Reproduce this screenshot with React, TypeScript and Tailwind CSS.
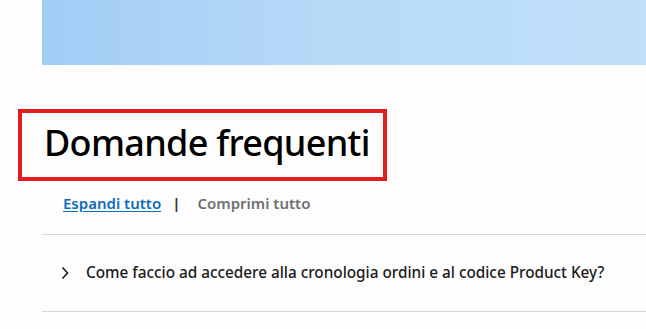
import { useState } from 'react'

export default function App() {
    const [open, setOpen] = useState(false)

    return (
        <div className="w-[646px] h-[329px] overflow-hidden bg-[#fdfdfd]" style={{ fontFamily: '"Noto Sans", "Open Sans", sans-serif' }}>
            {/* banner */}
            <div className="ml-[42px] h-[65px] bg-gradient-to-r from-[#a2cdf6] via-[#b8daf8] to-[#c0e0f9]" />

            {/* titolo */}
            <div className="mt-[44px] ml-[18px] w-[369px] h-[72px] border-4 border-[#e41c1c] flex items-center pl-[22px]">
                <h2 className="text-[36px] font-medium text-black tracking-[-0.7px] leading-none whitespace-nowrap -mt-[4px]">Domande frequenti</h2>
            </div>

            {/* azioni */}
            <div className="mt-[11px] ml-[63px] flex items-center text-[15px] font-semibold">
                <button className="text-[#0f6cbd] underline underline-offset-2">Espandi tutto</button>
                <span className="ml-[11px] mr-[17px] text-[#333] font-bold">|</span>
                <button className="text-[#707070]">Comprimi tutto</button>
            </div>

            {/* faq */}
            <div className="ml-[42px] mt-[19px] border-t border-[#d6d6d6]">
                <button
                    className="w-full h-[77px] flex items-center pl-[19px] text-left border-b border-[#d6d6d6]"
                    onClick={() => setOpen(!open)}
                >
                    <svg className="w-[8px] h-[14px] text-[#1a1a1a]" viewBox="0 0 8 14" fill="none" stroke="currentColor" strokeWidth={1.6}>
                        <path d="M1.5 1.5L6.5 7L1.5 12.5" />
                    </svg>
                    <span className="ml-[17px] text-[15.3px] font-medium text-[#1a1a1a]">
                        Come faccio ad accedere alla cronologia ordini e al codice Product Key?
                    </span>
                </button>
            </div>
        </div>
    )
}
